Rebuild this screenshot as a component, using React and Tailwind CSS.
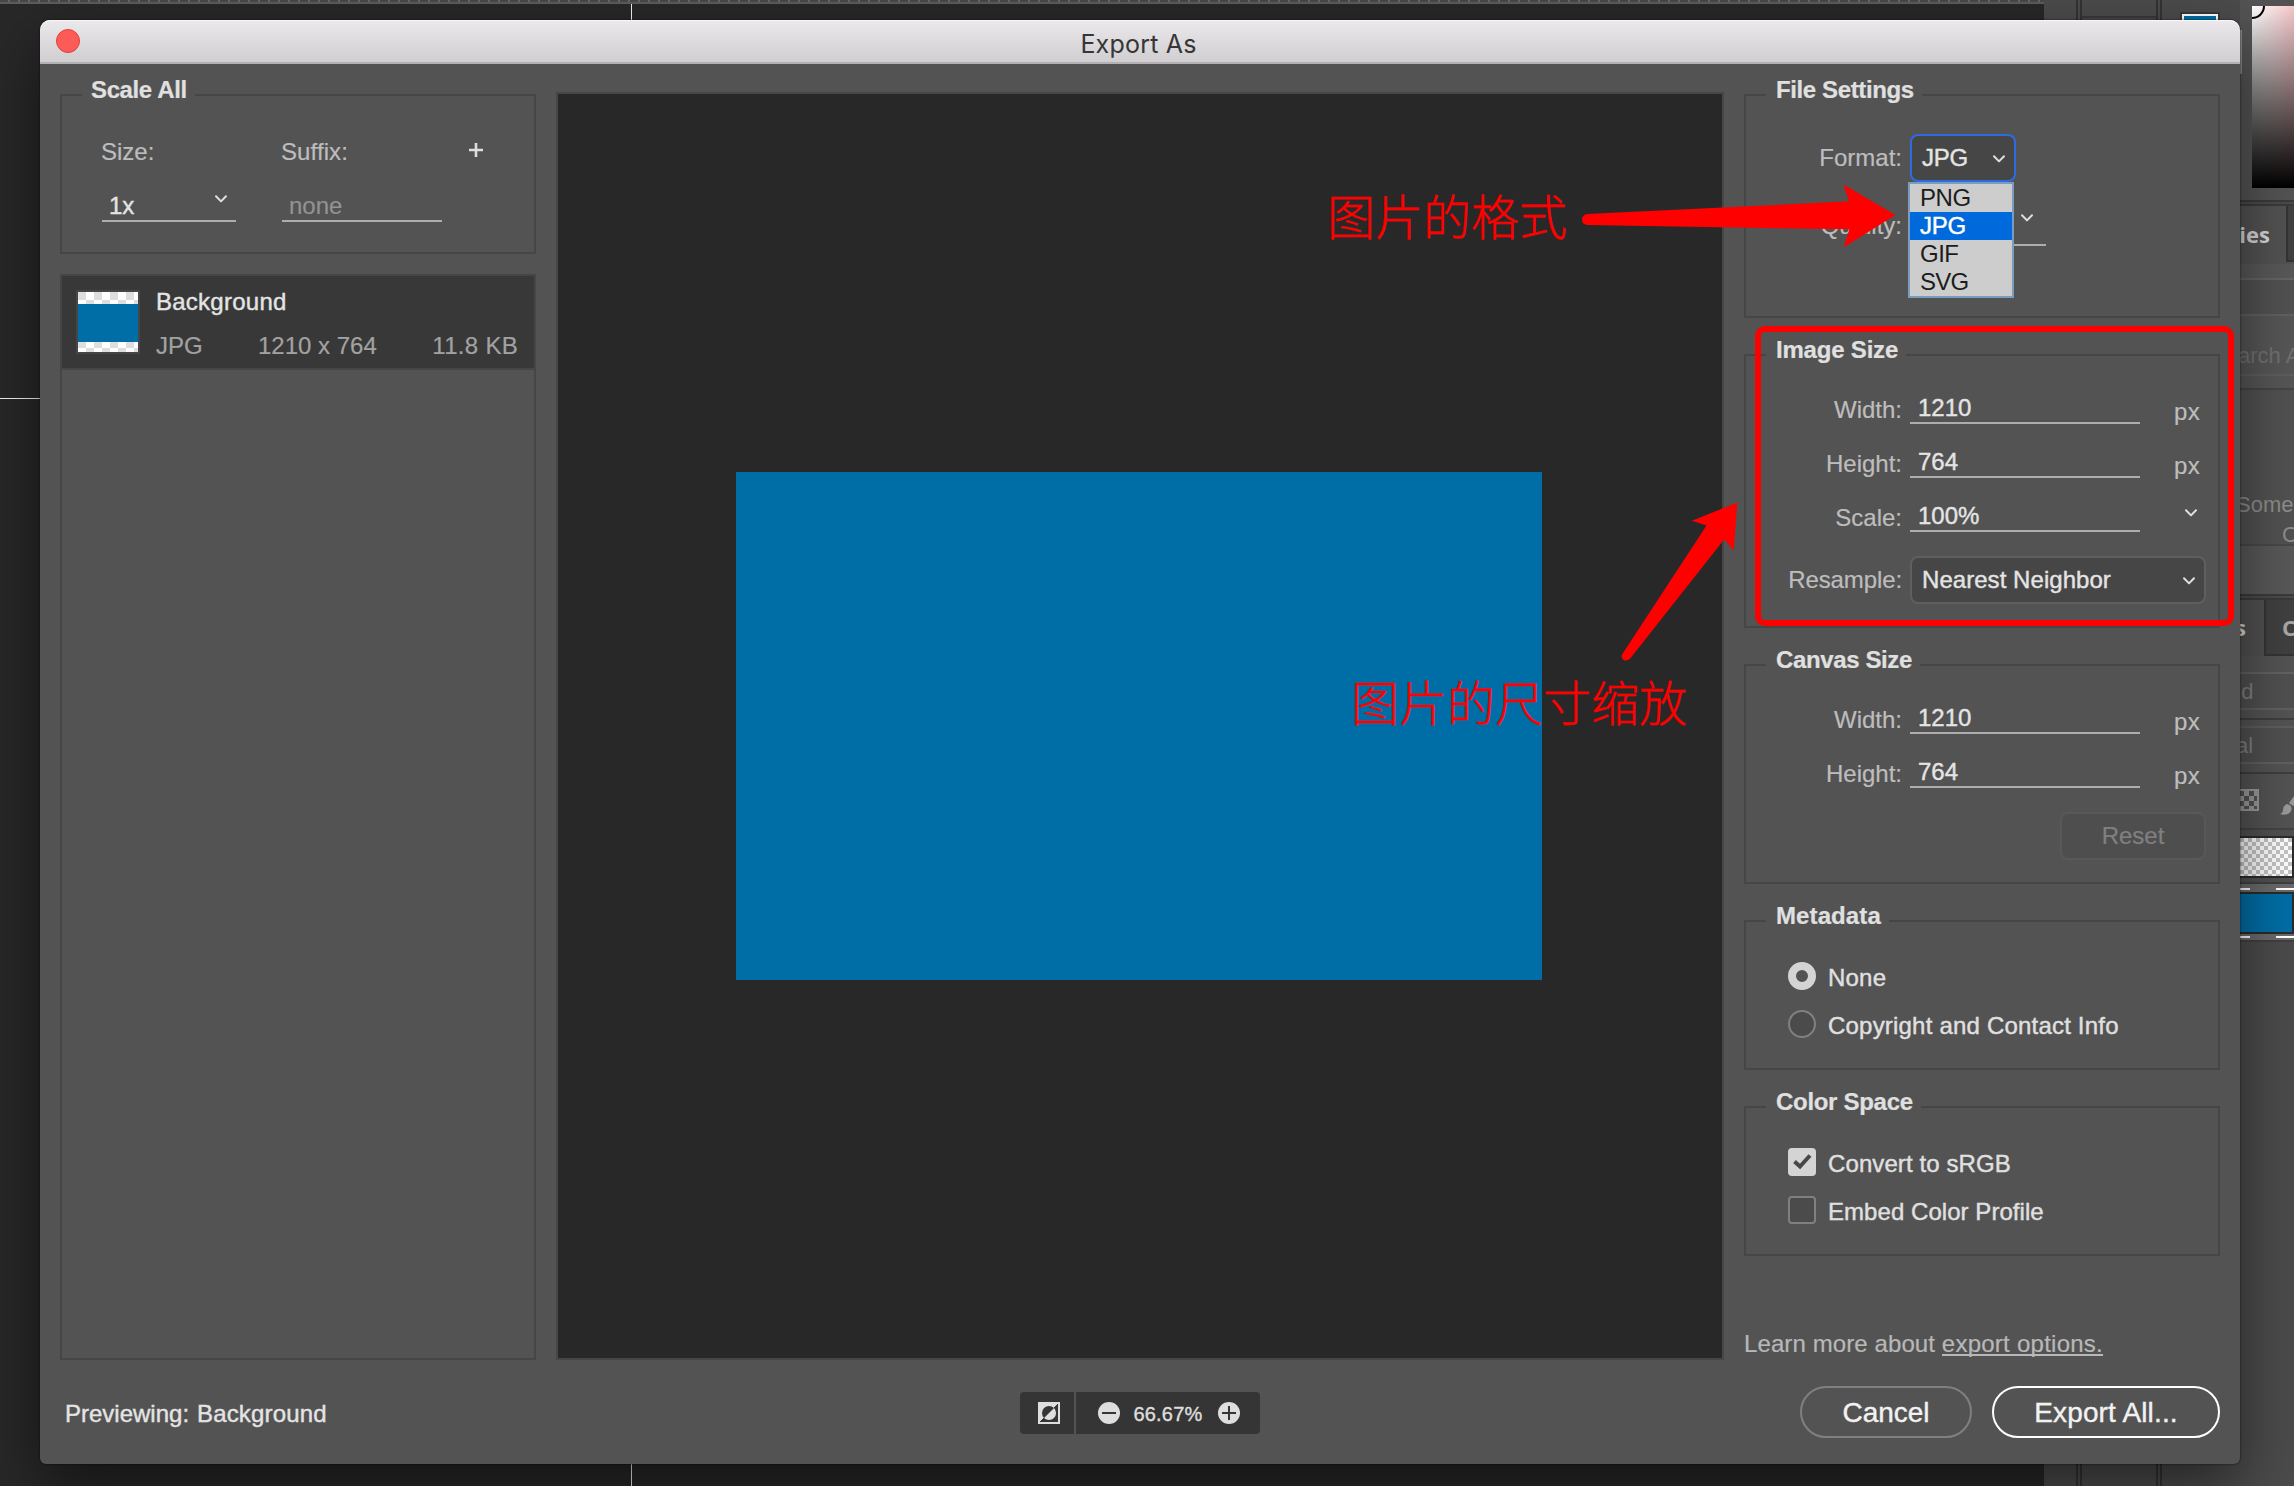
import React from "react";

const Chevron = ({ className = "" }) => (
  <svg className={className} width="14" height="10" viewBox="0 0 14 10" fill="none" stroke="#dedede" strokeWidth="2" strokeLinecap="round" strokeLinejoin="round">
    <path d="M2 2.2 L7 7.4 L12 2.2" />
  </svg>
);

const checker = "bg-[repeating-conic-gradient(#ffffff_0%_25%,#dedede_0%_50%)] bg-[length:16px_16px]";

function Group({ title, className = "", titleClass = "tracking-[-0.38px]", children }) {
  return (
    <section className={`relative border-2 border-[#464646] ${className}`}>
      <h2 className={`absolute left-5 -top-[21px] bg-[#535353] pl-[10px] pr-[8px] h-[30px] leading-[30px] whitespace-nowrap font-bold text-[#e0e0e0] ${titleClass}`}>{title}</h2>
      {children}
    </section>
  );
}

function Label({ children, className = "" }) {
  return <span className={`w-[156px] -mr-px shrink-0 text-right text-[#bdbdbd] ${className}`}>{children}</span>;
}

function Row({ label, value, unit }) {
  return (
    <div className="flex h-[54px]">
      <Label className="leading-[34px] pt-[13px]">{label}</Label>
      <div className="ml-[9px] w-[230px] h-11 border-b-2 border-[#adadad] pl-[8px] text-[#e4e4e4] stroked leading-[34px] pt-[11px]">{value}</div>
      {unit ? <span className="ml-[34px] pt-[15px] leading-[34px] text-[#bdbdbd] tracking-[0.4px]">{unit}</span> : <Chevron className="ml-11 mt-[20px]" />}
    </div>
  );
}

function Panels() {
  return (
    <aside className="absolute left-[2044px] top-0 w-[250px] h-[1486px] bg-[#4b4b4b] overflow-hidden font-['Open_Sans',sans-serif] text-[22px]">
      <div className="absolute left-8 top-0 w-[6px] h-full border-x-2 border-[#333333] bg-[#4b4b4b]" />
      <div className="absolute left-[112px] top-0 w-[6px] h-full border-x-2 border-[#333333] bg-[#4b4b4b]" />
      <div className="absolute left-[38px] top-4 w-[74px] h-[2px] bg-[#383838]" />
      <div className="absolute left-[136px] top-3 w-10 h-10 border-2 border-[#383838] bg-[#006ea6] outline-2 outline-white -outline-offset-4" />
      <div className="absolute left-[196px] top-0 w-[54px] flex flex-col">
        <div className="h-[200px] pt-[6px] pl-3 bg-[#535353]">
          <div className="relative h-[182px] overflow-hidden bg-[linear-gradient(to_bottom,transparent,#000),linear-gradient(to_right,#fff,#f4c6c9)]">
            <div className="absolute -left-[13px] -top-[13px] w-[26px] h-[26px] rounded-full border-2 border-black" />
          </div>
        </div>
        <div className="h-[6px] border-y-2 border-[#3a3a3a] bg-[#4a4a4a]" />
        <div className="flex h-[58px] bg-[#525252]">
          <b className="w-[46px] -ml-[12px] leading-[56px] text-[#d6d6d6] flex justify-end pr-1">ries</b>
          <div className="ml-[12px] w-2 h-[56px] bg-[#414141] border-l-2 border-b-2 border-[#343434]" />
        </div>
        <div className="h-[16px] bg-[#585858] border-b-2 border-[#646464]" />
        <div className="h-[36px] bg-[#515151] border-b-2 border-[#606060]" />
        <div className="h-[60px] bg-[#565656] border-b-2 border-[#5e5e5e] overflow-hidden whitespace-nowrap text-[#717171] font-['Liberation_Sans',sans-serif] leading-[80px]"><span className="-ml-[2px]">arch A</span></div>
        <div className="h-[14px] bg-[#565656] border-b-2 border-[#454545]" />
        <div className="h-[156px] bg-[#515151] border-b-2 border-[#484848] text-[#8d8d8d] font-['Liberation_Sans',sans-serif] pt-[100px] leading-[30px] whitespace-nowrap">
          <div className="-ml-[4px]">Some</div>
          <div className="ml-[42px]">C</div>
        </div>
        <div className="h-[48px] bg-[#585858]" />
        <div className="h-[6px] border-y-2 border-[#3a3a3a] bg-[#4a4a4a]" />
        <div className="flex h-[56px] bg-[#505050] overflow-hidden">
          <b className="-ml-[5px] w-[29px] text-[#d6d6d6] leading-[55px]">s</b>
          <b className="w-[30px] border-l-2 border-b-2 border-[#343434] bg-[#404040] pl-4 text-[#a8a8a8] leading-[55px]">C</b>
        </div>
        <div className="h-[18px] bg-[#535353] border-b-2 border-[#626262]" />
        <div className="h-[36px] bg-[#505050] border-b-2 border-[#606060] text-[#808080] leading-[35px] font-['Liberation_Sans',sans-serif]"><span className="-ml-[11px]">nd</span></div>
        <div className="h-[10px] border-b-2 border-[#3e3e3e] bg-[#535353]" />
        <div className="h-[8px] border-b-2 border-[#5e5e5e] bg-[#535353]" />
        <div className="h-[36px] bg-[#505050] border-b-2 border-[#606060] text-[#808080] leading-[35px] font-['Liberation_Sans',sans-serif]"><span className="-ml-[4px]">al</span></div>
        <div className="h-[10px] border-b-2 border-[#3e3e3e] bg-[#535353]" />
        <div className="flex h-[56px] border-b-2 border-[#444444] bg-[#535353] pt-[15px]">
          <svg className="-ml-[3px] shrink-0" width="22" height="22" viewBox="0 0 22 22" fill="#999">
            <path d="M0 0H22V22H0Z M2 2V7H7V2Z M12 2V7H17V2Z M7 7V12H12V7Z M17 7V12H20V7Z M2 12V17H7V12Z M12 12V17H17V12Z M7 17V20H12V17Z M17 17V20H20V17Z" fillRule="evenodd" />
          </svg>
          <svg className="ml-[21px] mt-[5px] shrink-0" width="20" height="22" viewBox="0 0 20 22" fill="#999"><path d="M0 20C5 19 1 12 7 10C13 11 13 17 8 20C5 21 2 21 0 20Z M9 9L14 2L20 0V8L13 12Z" /></svg>
        </div>
        <div className="h-[54px] bg-[#505050] border-b-2 border-[#404040] pt-[6px]">
          <div className="h-[42px] w-[54px] border-2 border-l-0 border-[#2b2b2b] bg-[repeating-conic-gradient(#fff_0%_25%,#c4c4c4_0%_50%)] bg-[length:8px_8px]" />
        </div>
        <div className="h-[58px] bg-[#6a6a6a] border-b-2 border-[#404040] pt-1">
          <div className="flex justify-between"><i className="w-[10px] h-[2px] bg-white" /><i className="w-[18px] h-[2px] bg-white" /></div>
          <div className="my-[2px] h-[42px] w-[54px] border-2 border-l-0 border-[#2b2b2b] bg-[#006ea6]" />
          <div className="flex justify-between"><i className="w-[10px] h-[2px] bg-white" /><i className="w-[18px] h-[2px] bg-white" /></div>
        </div>
      </div>
      <div className="absolute left-[196px] top-[30px] w-[2px] h-11 bg-[#8a8a8a]" />
    </aside>
  );
}

function Workspace() {
  return (
    <div className="absolute inset-0 bg-[#282828]">
      <div className="absolute left-0 top-0 w-[2044px] h-1 bg-[#5c5c5c]">
        <div className="h-[2px] bg-[repeating-linear-gradient(to_right,#484848_0_8px,#666666_8px_10px)]" />
      </div>
      <div className="absolute left-[631px] top-1 w-px h-[1482px] bg-[#f4f4f4]" />
      <div className="absolute left-0 top-[398px] w-10 h-px bg-[#f4f4f4]" />
      <Panels />
    </div>
  );
}

function LeftColumn() {
  return (
    <div className="w-[476px] flex flex-col">
      <Group title="Scale All" className="h-[160px]" titleClass="tracking-[-0.38px] indent-[-1px]">
        <div className="grid grid-cols-[134px_160px_auto] gap-x-[46px] ml-10 pt-[40px] text-[#bdbdbd]">
          <span className="leading-[32px] h-[30px] -ml-px">Size:</span>
          <span className="leading-[32px] h-[30px] -ml-px tracking-[0.1px]">Suffix:</span>
          <svg className="-ml-[20px] mt-[6px]" width="16" height="16" viewBox="0 0 16 16" stroke="#dedede" strokeWidth="2.6"><path d="M8 1V15M1 8H15" /></svg>
          <div className="mt-[16px] h-[40px] border-b-2 border-[#adadad] flex justify-between pl-[7px] pr-2 text-[#e4e4e4]">
            <span className="stroked leading-[30px] pt-[9px]">1x</span>
            <Chevron className="mt-[12px]" />
          </div>
          <div className="mt-[16px] h-[40px] border-b-2 border-[#adadad] pl-[7px] text-[#929292] leading-[30px] pt-[9px]">none</div>
        </div>
      </Group>
      <div className="mt-5 h-[1086px] border-2 border-[#464646]">
        <div className="h-[94px] flex bg-[#383838] border-b-2 border-[#464646] pl-[14px] pt-[14px]">
          <div className={`w-16 h-16 border-2 border-[#464646] pt-[12px] pb-[10px] ${checker}`}>
            <div className="h-[38px] bg-[#006ea6]" />
          </div>
          <div className="ml-4 w-[362px]">
            <div className="leading-[30px] -mt-[3px] text-[#e4e4e4] stroked tracking-[0.25px]">Background</div>
            <div className="flex leading-[30px] mt-[14px] text-[#a2a2a2]">
              <span className="w-[102px]">JPG</span>
              <span>1210 x 764</span>
              <span className="ml-auto tracking-[0.3px]">11.8 KB</span>
            </div>
          </div>
        </div>
      </div>
    </div>
  );
}

function Option({ children, control }) {
  return (
    <div className="flex h-12">
      {control}
      <span className="ml-3 leading-[31px] text-[#e0e0e0] stroked whitespace-nowrap tracking-[0.2px]">{children}</span>
    </div>
  );
}

function RightColumn() {
  return (
    <div className="w-[476px]">
      <Group title="File Settings" className="h-[224px] pt-[38px]">
        <div className="flex">
          <Label className="leading-[44px] mt-[2px]">Format:</Label>
          <div className="relative ml-[9px] w-[106px] h-12 rounded-lg border-2 border-[#2f6be0] bg-[#464646] flex justify-between items-center pl-[10px] pr-[9px] text-[#e4e4e4] stroked">
            <span className="-mt-px -tracking-[0.3px]">JPG</span>
            <Chevron className="mt-[2px] -mr-px" />
            <ul className="absolute z-10 -left-1 top-[46px] w-[106px] h-[116px] border-2 border-[#7a9cbf] bg-[#cdcdcd] text-[#1c1c1c] [-webkit-text-stroke:0]">
              <li className="h-7 leading-7 pl-[10px] -tracking-[0.4px]">PNG</li>
              <li className="h-7 leading-7 pl-[10px] -tracking-[0.3px] bg-[#0069dc] text-white stroked">JPG</li>
              <li className="h-7 leading-7 pl-[10px] -tracking-[0.5px]">GIF</li>
              <li className="h-7 leading-7 pl-[10px] -tracking-[0.7px]">SVG</li>
            </ul>
          </div>
        </div>
        <div className="flex mt-[20px]">
          <Label className="leading-[30px] mt-[9px]">Quality:</Label>
          <div className="ml-[9px] w-[136px] h-11 border-b-2 border-[#adadad] flex justify-end pr-3">
            <Chevron className="mt-[11px]" />
          </div>
        </div>
      </Group>
      <Group title="Image Size" className="h-[274px] mt-9 pt-6" titleClass="tracking-[-0.2px]">
        <Row label="Width:" value="1210" unit="px" />
        <Row label="Height:" value="764" unit="px" />
        <Row label="Scale:" value="100%" />
        <div className="flex mt-[14px]">
          <Label className="leading-[48px] -tracking-[0.1px]">Resample:</Label>
          <div className="ml-[9px] w-[296px] h-12 rounded-lg border-2 border-[#5f5f5f] bg-[#464646] flex items-center justify-between pl-[10px] pr-[9px] text-[#e4e4e4] stroked whitespace-nowrap">
            <span className="-mt-px tracking-[0.05px]">Nearest Neighbor</span>
            <Chevron className="mt-[2px] -mr-px" />
          </div>
        </div>
      </Group>
      <Group title="Canvas Size" className="h-[220px] mt-9 pt-6">
        <Row label="Width:" value="1210" unit="px" />
        <Row label="Height:" value="764" unit="px" />
        <div className="ml-auto mr-3 mt-[14px] w-[146px] h-12 rounded-lg border-2 border-[#585858] bg-[#4e4e4e] text-center leading-[44px] text-[#808080]">Reset</div>
      </Group>
      <Group title="Metadata" className="h-[150px] mt-9 pt-10 pl-[42px]" titleClass="tracking-[0.1px]">
        <Option control={<i className="w-7 h-7 rounded-full border-8 border-[#d4d4d4] bg-[#535353]" />}>None</Option>
        <Option control={<i className="w-7 h-7 rounded-full border-2 border-[#808080] bg-[#4b4b4b]" />}>Copyright and Contact Info</Option>
      </Group>
      <Group title="Color Space" className="h-[150px] mt-9 pt-10 pl-[42px]" titleClass="tracking-[-0.3px]">
        <Option control={
          <svg width="28" height="28" viewBox="0 0 28 28" fill="none"><rect width="28" height="28" rx="4" fill="#d4d4d4" /><path d="M6.5 13.5L12 18.5L22 7.5" stroke="#484848" strokeWidth="4" /></svg>
        }><span className="tracking-[0.1px]">Convert to sRGB</span></Option>
        <Option control={<i className="w-7 h-7 rounded-[4px] border-2 border-[#808080] bg-[#4b4b4b]" />}><span className="tracking-[0.05px]">Embed Color Profile</span></Option>
      </Group>
      <p className="mt-[72px] leading-[31px] text-[#b8b8b8] whitespace-nowrap tracking-[0.1px]">
        Learn more about <span className="border-b-2 border-[#b8b8b8] inline-block h-[28px] leading-[31px] tracking-[0.25px]">export options.</span>
      </p>
    </div>
  );
}

function Footer() {
  return (
    <footer className="flex h-[104px] relative">
      <div className="ml-[25px] w-[955px] mt-[38px] leading-[31px] text-[#e4e4e4] stroked"><span>Previewing:</span><span className="ml-[8px] tracking-[0.15px]">Background</span></div>
      <div className="mt-8 w-[240px] h-[42px] flex gap-[2px] rounded overflow-hidden">
        <div className="w-[54px] bg-[#353535] pl-[18px] pt-[10px]">
          <svg width="22" height="22" viewBox="0 0 22 22">
            <rect width="22" height="22" fill="#dedede" />
            <path d="M20 2V20H2Z" fill="#353535" />
            <circle cx="11" cy="11" r="7" fill="#353535" />
            <path d="M2 20L20 2" stroke="#353535" strokeWidth="1" />
            <path d="M6 16L16 6A7 7 0 0 1 6 16Z" fill="#dedede" />
          </svg>
        </div>
        <div className="flex-1 bg-[#353535] flex items-start pl-[22px] pr-5 pt-[10px] justify-between">
          <svg width="22" height="22" viewBox="0 0 22 22"><circle cx="11" cy="11" r="11" fill="#dedede" /><path d="M4 11H18" stroke="#353535" strokeWidth="2" /></svg>
          <span className="text-[20px] leading-[24px] text-[#dedede] stroked tracking-[0.2px] -ml-[2px]">66.67%</span>
          <svg width="22" height="22" viewBox="0 0 22 22"><circle cx="11" cy="11" r="11" fill="#dedede" /><path d="M4 11H18M11 4V18" stroke="#353535" strokeWidth="2" /></svg>
        </div>
      </div>
      <button className="ml-[540px] mt-[26px] w-[172px] h-[52px] rounded-full border-2 border-[#808080] text-[28px] leading-[49px] text-[#f2f2f2] stroked">Cancel</button>
      <button className="ml-5 mt-[26px] w-[228px] h-[52px] rounded-full border-2 border-white text-[28px] leading-[49px] text-[#f2f2f2] stroked tracking-[0.15px]">Export All...</button>
    </footer>
  );
}

function Annotations() {
  return (
    <>
      <div className="absolute left-[1755px] top-[326px] w-[479px] h-[300px] rounded-[10px] border-6 border-[#ff0000]" />
      <svg className="absolute left-0 top-0 pointer-events-none" width="2294" height="1486" fill="#ff0000">
        <path d="M1587 214L1849 201.3L1843.3 184.4L1895.5 215L1843.7 247.2L1849.4 229.3L1587 225Q1582 224 1582 219.500Q1582 215 1587 214Z" />
        <path d="M1737.3 502.500L1691.900 520.800L1706.500 525.400L1622 654.500Q1620.500 659 1624.500 660.500Q1628 661 1630.600 658L1724.300 539.200L1733.800 550.700Z" />
      </svg>
      <div className="absolute left-[1327px] top-[178px] text-[48px] leading-[72px] whitespace-nowrap text-[#ff0000] font-light stroked font-['Noto_Sans_CJK_SC',sans-serif]">图片的格式</div>
      <div className="absolute left-[1351px] top-[664px] text-[48px] leading-[72px] whitespace-nowrap text-[#ff0000] font-light stroked font-['Noto_Sans_CJK_SC',sans-serif]">图片的尺寸缩放</div>
    </>
  );
}

export default function App() {
  return (
    <div className="relative w-[2294px] h-[1486px] overflow-hidden font-['Liberation_Sans',Arial,sans-serif] text-[24px]">
      <style>{`.stroked{-webkit-text-stroke:0.4px currentColor}`}</style>
      <Workspace />
      <main className="absolute left-10 top-5 w-[2200px] h-[1444px] rounded-t-[10px] rounded-b-[6px] bg-[#535353] shadow-[0_24px_60px_rgba(0,0,0,0.5),0_0_2px_rgba(0,0,0,0.8)] [-webkit-text-stroke:0.2px_currentColor]">
        <header className="h-11 rounded-t-[10px] border-b-2 border-[#b4b1b4] bg-linear-to-b from-[#ebe9eb] to-[#d0ced0] flex items-center shadow-[inset_0_1px_0_#f8f6f8]">
          <i className="ml-4 w-6 h-6 rounded-full bg-[#fc5b57] border border-[#e0403c]" />
          <h1 className="absolute left-0 right-[3px] top-px text-center font-['Inter',sans-serif] text-[25px] tracking-[0.2px] text-[#363636] leading-[46px] [-webkit-text-stroke:0]">Export As</h1>
        </header>
        <div className="h-[1296px] flex px-5">
          <div className="pt-[30px]"><LeftColumn /></div>
          <div className="mt-7 ml-5 w-[1168px] h-[1268px] border-2 border-[#464646] bg-[#282828] flex items-center justify-center">
            <div className="w-[806px] h-[508px] bg-[#006ea6] -ml-[2px]" />
          </div>
          <div className="pt-[30px] ml-5"><RightColumn /></div>
        </div>
        <Footer />
      </main>
      <Annotations />
    </div>
  );
}
